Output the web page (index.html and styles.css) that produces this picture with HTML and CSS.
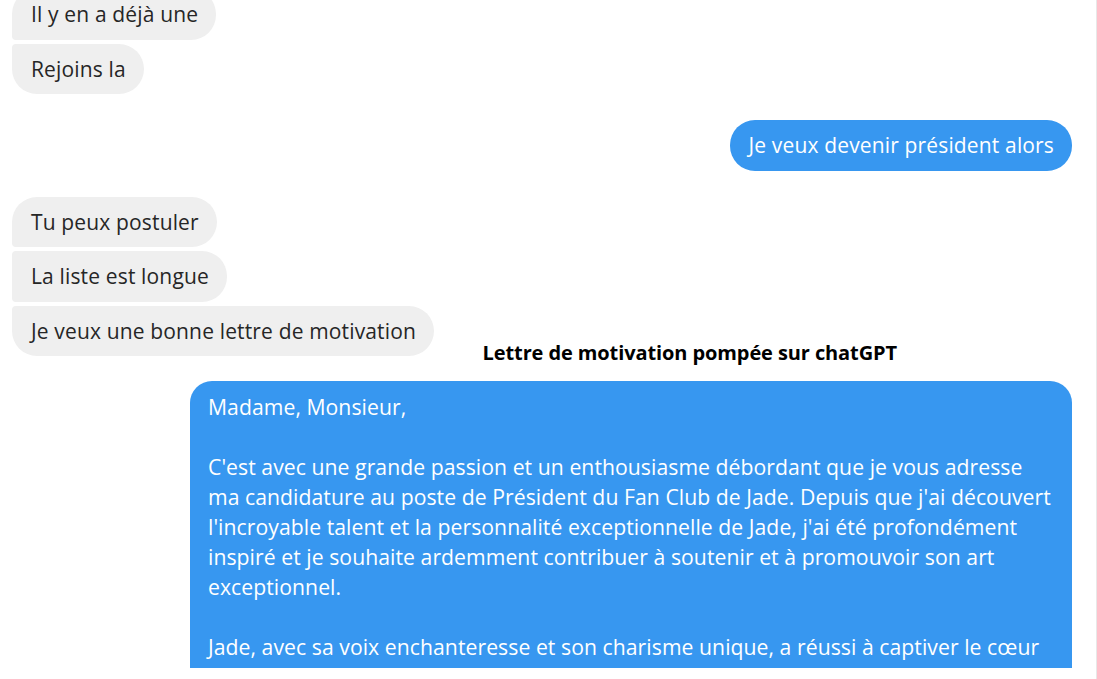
FILE: index.html
```html
<!DOCTYPE html>
<html lang="fr">
<head>
<meta charset="utf-8">
<title>Messages</title>
<link rel="stylesheet" href="styles.css">
</head>
<body>
<div class="frame">
  <div class="chat">
    <div class="group them first-cut">
      <div class="bubble gray top">Il y en a déjà une</div>
      <div class="bubble gray bottom">Rejoins la</div>
    </div>
    <div class="group me">
      <div class="bubble blue">Je veux devenir président alors</div>
    </div>
    <div class="group them">
      <div class="bubble gray top">Tu peux postuler</div>
      <div class="bubble gray mid">La liste est longue</div>
      <div class="bubble gray bottom">Je veux une bonne lettre de motivation</div>
    </div>
    <div class="group me letter-group">
      <div class="caption">Lettre de motivation pompée sur chatGPT</div>
      <div class="bubble blue letter">
        <p>Madame, Monsieur,</p>
        <p>C'est avec une grande passion et un enthousiasme débordant que je vous adresse<br>ma candidature au poste de Président du Fan Club de Jade. Depuis que j'ai découvert<br>l'incroyable talent et la personnalité exceptionnelle de Jade, j'ai été profondément<br>inspiré et je souhaite ardemment contribuer à soutenir et à promouvoir son art<br>exceptionnel.</p>
        <p>Jade, avec sa voix enchanteresse et son charisme unique, a réussi à captiver le cœur</p>
      </div>
    </div>
  </div>
</div>
</body>
</html>
```

FILE: styles.css
```css
html, body {
  margin: 0;
  padding: 0;
  background: #ffffff;
}

.frame {
  width: 1096px;
  height: 679px;
  border-right: 1px solid #e8e8e8;
  background: #ffffff;
  overflow: hidden;
}

.chat {
  height: 668px;
  overflow: hidden;
  display: flex;
  flex-direction: column;
  gap: 26px;
  padding: 0 24px 0 12px;
  font-family: "Open Sans", "Noto Sans", sans-serif;
}

.group {
  display: flex;
  flex-direction: column;
  gap: 4px;
}

.group.them { align-items: flex-start; }
.group.me { align-items: flex-end; }

.first-cut { margin-top: -11px; }

.bubble {
  box-sizing: border-box;
  padding: 13px 18px 13px 19px;
  font-size: 21px;
  letter-spacing: 0.15px;
  line-height: 24.5px;
  border-radius: 25px;
}

.gray {
  background: #efefef;
  color: #262626;
}

.gray.top { border-bottom-left-radius: 4px; }
.gray.mid { border-top-left-radius: 4px; border-bottom-left-radius: 4px; }
.gray.bottom { border-top-left-radius: 4px; }

.blue {
  background: #3797f0;
  color: #ffffff;
}

.letter-group {
  position: relative;
  margin-top: -1.5px;
}

.caption {
  position: absolute;
  right: 175px;
  top: -40px;
  font-weight: 700;
  font-size: 20px;
  letter-spacing: -0.1px;
  line-height: 24px;
  color: #000000;
}

.letter {
  width: 882px;
  min-height: 320px;
  border-radius: 22px;
  padding: 11px 10px 14px 18px;
  font-size: 21.2px;
  letter-spacing: 0.05px;
  line-height: 30px;
  white-space: nowrap;
}

.letter p {
  margin: 0 0 30px 0;
}
```
